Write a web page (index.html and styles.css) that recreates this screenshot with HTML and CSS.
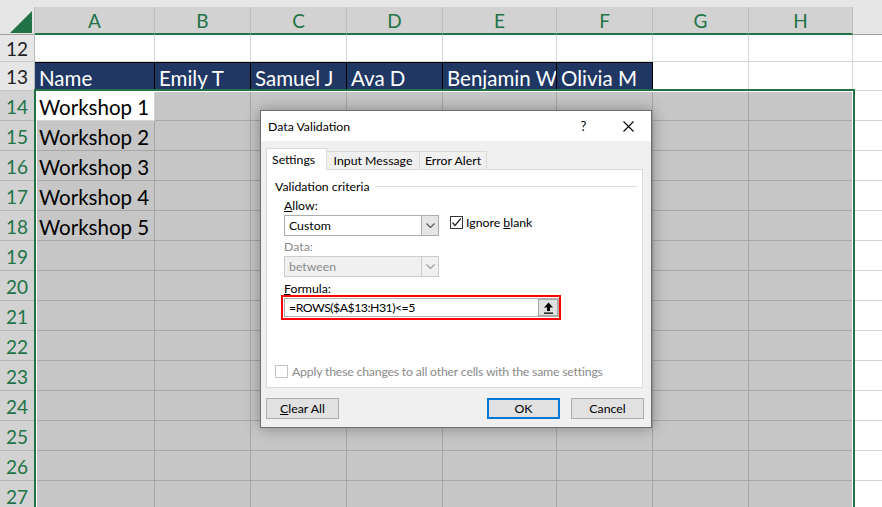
FILE: index.html
```html
<!DOCTYPE html>
<html>
<head>
<meta charset="utf-8">
<link rel="stylesheet" href="styles.css">
</head>
<body>
<div class="sheet">
  <div class="topband"></div>
  <div class="grid">
    <div class="corner"><svg class="tri" width="22" height="22" viewBox="0 0 22 22"><polygon points="22,0 22,22 0,22" fill="#217346"/></svg></div>
    <div class="ch">A</div><div class="ch">B</div><div class="ch">C</div><div class="ch">D</div><div class="ch">E</div><div class="ch">F</div><div class="ch">G</div><div class="ch">H</div><div class="chx"></div>

    <div class="rh">12</div>
    <div class="c"></div><div class="c"></div><div class="c"></div><div class="c"></div><div class="c"></div><div class="c"></div><div class="c"></div><div class="c"></div><div class="c e"></div>

    <div class="rh">13</div>
    <div class="c n">Name</div><div class="c n">Emily T</div><div class="c n">Samuel J</div><div class="c n">Ava D</div><div class="c n">Benjamin W</div><div class="c n">Olivia M</div><div class="c"></div><div class="c"></div><div class="c e"></div>

    <div class="rh s">14</div>
    <div class="c">Workshop 1</div><div class="c g"></div><div class="c g"></div><div class="c g"></div><div class="c g"></div><div class="c g"></div><div class="c g"></div><div class="c g"></div><div class="c e"></div>

    <div class="rh s">15</div>
    <div class="c g">Workshop 2</div><div class="c g"></div><div class="c g"></div><div class="c g"></div><div class="c g"></div><div class="c g"></div><div class="c g"></div><div class="c g"></div><div class="c e"></div>

    <div class="rh s">16</div>
    <div class="c g">Workshop 3</div><div class="c g"></div><div class="c g"></div><div class="c g"></div><div class="c g"></div><div class="c g"></div><div class="c g"></div><div class="c g"></div><div class="c e"></div>

    <div class="rh s">17</div>
    <div class="c g">Workshop 4</div><div class="c g"></div><div class="c g"></div><div class="c g"></div><div class="c g"></div><div class="c g"></div><div class="c g"></div><div class="c g"></div><div class="c e"></div>

    <div class="rh s">18</div>
    <div class="c g">Workshop 5</div><div class="c g"></div><div class="c g"></div><div class="c g"></div><div class="c g"></div><div class="c g"></div><div class="c g"></div><div class="c g"></div><div class="c e"></div>

    <div class="rh s">19</div>
    <div class="c g"></div><div class="c g"></div><div class="c g"></div><div class="c g"></div><div class="c g"></div><div class="c g"></div><div class="c g"></div><div class="c g"></div><div class="c e"></div>

    <div class="rh s">20</div>
    <div class="c g"></div><div class="c g"></div><div class="c g"></div><div class="c g"></div><div class="c g"></div><div class="c g"></div><div class="c g"></div><div class="c g"></div><div class="c e"></div>

    <div class="rh s">21</div>
    <div class="c g"></div><div class="c g"></div><div class="c g"></div><div class="c g"></div><div class="c g"></div><div class="c g"></div><div class="c g"></div><div class="c g"></div><div class="c e"></div>

    <div class="rh s">22</div>
    <div class="c g"></div><div class="c g"></div><div class="c g"></div><div class="c g"></div><div class="c g"></div><div class="c g"></div><div class="c g"></div><div class="c g"></div><div class="c e"></div>

    <div class="rh s">23</div>
    <div class="c g"></div><div class="c g"></div><div class="c g"></div><div class="c g"></div><div class="c g"></div><div class="c g"></div><div class="c g"></div><div class="c g"></div><div class="c e"></div>

    <div class="rh s">24</div>
    <div class="c g"></div><div class="c g"></div><div class="c g"></div><div class="c g"></div><div class="c g"></div><div class="c g"></div><div class="c g"></div><div class="c g"></div><div class="c e"></div>

    <div class="rh s">25</div>
    <div class="c g"></div><div class="c g"></div><div class="c g"></div><div class="c g"></div><div class="c g"></div><div class="c g"></div><div class="c g"></div><div class="c g"></div><div class="c e"></div>

    <div class="rh s">26</div>
    <div class="c g"></div><div class="c g"></div><div class="c g"></div><div class="c g"></div><div class="c g"></div><div class="c g"></div><div class="c g"></div><div class="c g"></div><div class="c e"></div>

    <div class="rh s">27</div>
    <div class="c g"></div><div class="c g"></div><div class="c g"></div><div class="c g"></div><div class="c g"></div><div class="c g"></div><div class="c g"></div><div class="c g"></div><div class="c e"></div>
  </div>

  <div class="selection"></div>

  <div class="dialog">
    <div class="titlebar">
      <span class="title">Data Validation</span>
      <span class="tb-btn help">?</span>
      <span class="tb-btn close"><svg width="11" height="11" viewBox="0 0 11 11"><path d="M0.5 0.5 L10.5 10.5 M10.5 0.5 L0.5 10.5" stroke="#000" stroke-width="1.1" fill="none"/></svg></span>
    </div>
    <div class="dbody">
      <div class="tabs">
        <div class="tab active">Settings</div>
        <div class="tab t2">Input Message</div>
        <div class="tab t3">Error Alert</div>
      </div>
      <div class="panel">
        <div class="group"><span>Validation criteria</span><span class="gline"></span></div>
        <div class="fields">
          <div class="lbl"><span class="u">A</span>llow:</div>
          <div class="row">
            <div class="combo"><span class="val">Custom</span><span class="arr"><svg width="9" height="6" viewBox="0 0 9 6"><path d="M0.5 0.5 L4.5 4.5 L8.5 0.5" stroke="#555" stroke-width="1.1" fill="none"/></svg></span></div>
            <div class="cb on"><svg width="11" height="11" viewBox="0 0 11 11"><path d="M1.5 5.5 L4 8.5 L9.8 1.5" stroke="#222" stroke-width="1.2" fill="none"/></svg></div>
            <span class="cbl">Ignore <span class="u">b</span>lank</span>
          </div>
          <div class="lbl dim">Data:</div>
          <div class="combo dis"><span class="val">between</span><span class="arr"><svg width="9" height="6" viewBox="0 0 9 6"><path d="M0.5 0.5 L4.5 4.5 L8.5 0.5" stroke="#9a9a9a" stroke-width="1.1" fill="none"/></svg></span></div>
          <div class="lbl"><span class="u">F</span>ormula:</div>
          <div class="redbox">
            <div class="input"><span class="itext">=ROWS($A$13:H31)&lt;=5</span><span class="pick"><svg width="11" height="12" viewBox="0 0 11 12"><polygon points="5.5,0.5 1,5.5 4,5.5 4,9 7,9 7,5.5 10,5.5" fill="#000"/><rect x="1" y="10.5" width="9" height="1.3" fill="#000"/></svg></span></div>
          </div>
        </div>
        <div class="apply"><div class="cb dis"></div><span class="dim atext">Apply these changes to all other cells with the same settings</span></div>
      </div>
      <div class="buttons">
        <div class="btn"><span><span class="u">C</span>lear All</span></div>
        <div class="btn primary">OK</div>
        <div class="btn cancel">Cancel</div>
      </div>
    </div>
  </div>
</div>
</body>
</html>
```

FILE: styles.css
```css
* { box-sizing: border-box; }
html, body { margin: 0; padding: 0; }
body {
  width: 882px;
  height: 507px;
  overflow: hidden;
  background: #fff;
  font-family: "Lato", "Liberation Sans", sans-serif;
}
.sheet { position: relative; width: 882px; height: 507px; overflow: hidden; }
.topband { height: 7px; background: #e6e6e6; }

.grid {
  display: grid;
  grid-template-columns: 35px 120px 96px 96px 96px 114px 96px 96px 104px 1fr;
  grid-template-rows: 28px 27px 29px repeat(14, 30px);
}

.corner {
  background: #e6e6e6;
  border-right: 1px solid #bcbcbc;
  border-bottom: 1px solid #a0a0a0;
  display: flex;
  align-items: flex-start;
  justify-content: flex-start;
  padding: 4px 0 0 10px;
}
.ch {
  background: #d2d2d2;
  border-right: 1px solid #bcbcbc;
  border-bottom: 2px solid #217346;
  color: #217346;
  font-size: 19px;
  display: flex;
  align-items: center;
  justify-content: center;
}
.chx { background: #e6e6e6; border-bottom: 1px solid #a0a0a0; }

.rh {
  background: #e6e6e6;
  border-right: 1px solid #bcbcbc;
  border-bottom: 1px solid #c8c8c8;
  color: #222;
  font-size: 19px;
  display: flex;
  align-items: center;
  justify-content: center;
  padding-top: 1px;
}
.rh.s { background: #d2d2d2; color: #217346; border-bottom-color: #b4b4b4; }

.c {
  border-right: 1px solid #d4d4d4;
  border-bottom: 1px solid #d4d4d4;
  background: #fff;
  color: #000;
  font-size: 20.5px;
  padding: 2px 0 0 4px;
  display: flex;
  align-items: center;
  white-space: nowrap;
  overflow: hidden;
}
.c.n { background: #203764; color: #fff; border-right-color: #000; border-top: 1px solid #000; border-bottom-color: #000; }
.c.g { background: #c6c6c6; border-right-color: #a6a6a6; border-bottom-color: #a6a6a6; }
.c.e { border-right: none; }

.selection {
  position: absolute;
  left: 34px;
  top: 89px;
  width: 821px;
  height: 440px;
  border: 2px solid #217346;
  box-shadow: inset 0 0 0 1px #fff;
  pointer-events: none;
}

/* dialog */
.dialog {
  position: absolute;
  left: 260px;
  top: 110px;
  width: 392px;
  height: 318px;
  background: #f0f0f0;
  border: 1px solid #707070;
  box-shadow: 0 0 14px rgba(0, 0, 0, 0.35);
  display: flex;
  flex-direction: column;
  font-family: "Lato", "Liberation Sans", sans-serif;
  font-size: 12.3px;
  color: #000;
}
.titlebar {
  height: 30px;
  background: #fff;
  display: flex;
  align-items: center;
  padding-left: 7px;
}
.title { flex: 1; }
.tb-btn {
  width: 45px;
  height: 30px;
  display: flex;
  align-items: center;
  justify-content: center;
}
.help { font-size: 13px; }

.dbody {
  flex: 1;
  display: flex;
  flex-direction: column;
  padding: 7px 8px 8px 5px;
}
.tabs {
  display: flex;
  align-items: flex-end;
  height: 21px;
  position: relative;
  z-index: 1;
}
.tab {
  height: 18px;
  border: 1px solid #d9d9d9;
  border-bottom: none;
  background: #f0f0f0;
  display: flex;
  align-items: center;
  justify-content: center;
}
.tab.active {
  width: 61px;
  height: 22px;
  margin-bottom: -1px;
  background: #fff;
  justify-content: flex-start;
  padding-left: 5px;
}
.tab.t2 { width: 93px; border-left: none; }
.tab.t3 { width: 67px; border-left: none; }

.panel {
  flex: 1;
  background: #fff;
  border: 1px solid #d9d9d9;
  display: flex;
  flex-direction: column;
  padding: 0 5px 8px 8px;
}
.group {
  display: flex;
  align-items: center;
  height: 16px;
  margin-top: 8px;
}
.gline { flex: 1; height: 1px; background: #dcdcdc; margin-left: 5px; }

.fields { padding-left: 9px; display: flex; flex-direction: column; }
.lbl { height: 15px; line-height: 15px; margin-top: 4px; }
.lbl.dim { margin-top: 3px; }
.fields .lbl:nth-of-type(3) { margin-top: 3px; }
.dim { color: #8a8a8a; }
.u { text-decoration: underline; }

.row { display: flex; align-items: flex-start; margin-top: 2px; }
.combo {
  width: 155px;
  height: 21px;
  border: 1px solid #adadad;
  background: #fff;
  display: flex;
}
.fields > .combo { margin-top: 2px; }
.combo .val { flex: 1; padding-left: 4px; display: flex; align-items: center; }
.combo .arr {
  width: 17px;
  background: #e5e5e5;
  border-left: 1px solid #adadad;
  display: flex;
  align-items: center;
  justify-content: center;
}
.combo.dis { border-color: #cccccc; background: #f0f0f0; color: #8a8a8a; }
.combo.dis .arr { background: #f0f0f0; border-left-color: #cccccc; }

.cb {
  width: 13px;
  height: 13px;
  border: 1px solid #333;
  background: #fff;
  display: flex;
  align-items: center;
  justify-content: center;
}
.row .cb { margin: 1px 0 0 11px; }
.cbl { margin-left: 3px; line-height: 15px; }
.cb.dis { border-color: #c4c4c4; }

.redbox {
  width: 280px;
  height: 25px;
  margin: -1px 0 0 -3px;
  border: 2px solid #ff0000;
  padding: 1px 1px 1px 1px;
}
.input {
  height: 19px;
  width: 275px;
  border: 1px solid #adadad;
  background: #fff;
  display: flex;
}
.itext { flex: 1; padding-left: 4px; display: flex; align-items: center; letter-spacing: -0.5px; }
.pick {
  width: 20px;
  background: #e1e1e1;
  border: 1px solid #a8a8a8;
  display: flex;
  align-items: center;
  justify-content: center;
}

.apply {
  margin-top: auto;
  height: 15px;
  display: flex;
  align-items: center;
  gap: 4px;
}
.atext { letter-spacing: -0.2px; }

.buttons {
  display: flex;
  height: 21px;
  margin-top: 10px;
  margin-right: -1px;
}
.btn {
  width: 73px;
  height: 21px;
  background: #e1e1e1;
  border: 1px solid #adadad;
  display: flex;
  align-items: center;
  justify-content: center;
}
.btn.primary { margin-left: auto; border: 2px solid #0078d7; }
.btn.cancel { margin-left: 11px; }
```
